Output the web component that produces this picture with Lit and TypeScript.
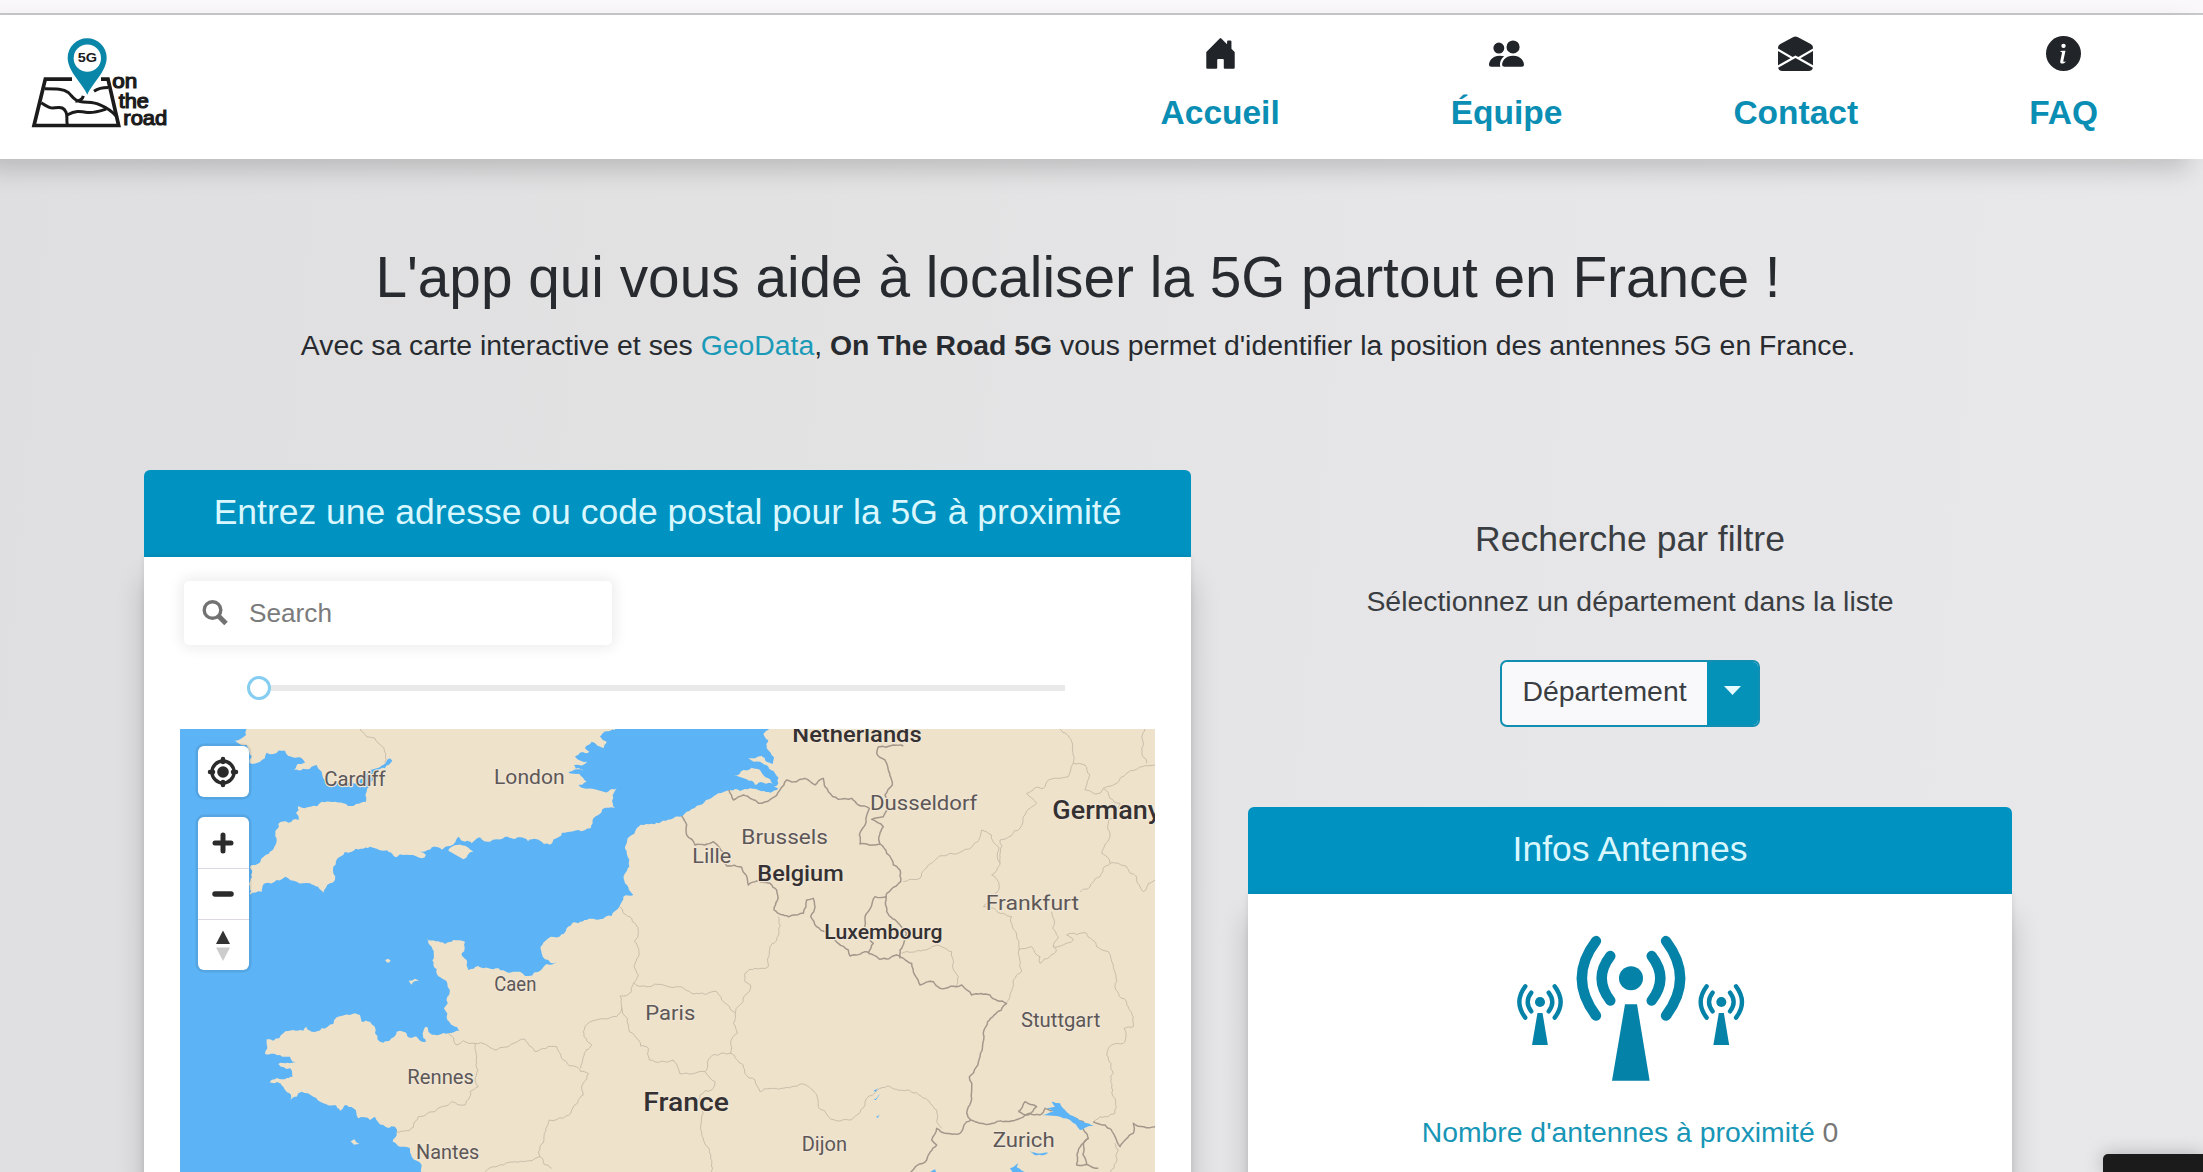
import { LitElement, html, svg, css } from "lit";
import { customElement } from "lit/decorators.js";

type Pt = [number, number];

/** Turns "x,y x,y ..." into a path whose edges are broken up like a natural shoreline. */
function trace(points: string, amount = 0.16, closed = false): string {
  let seed = points.length * 7 + 3;
  const rnd = () => {
    seed = (seed * 1103515245 + 12345) % 2147483648;
    return seed / 2147483648 - 0.5;
  };
  const pts = points.trim().split(/\s+/).map((p) => p.split(",").map(Number) as Pt);
  const out: Pt[] = [pts[0]];
  const split = (a: Pt, b: Pt) => {
    const dx = b[0] - a[0];
    const dy = b[1] - a[1];
    const len = Math.hypot(dx, dy);
    if (len < 11 || len > 400) {
      out.push(b);
      return;
    }
    const k = rnd() * 2 * amount;
    const m: Pt = [(a[0] + b[0]) / 2 - dy * k, (a[1] + b[1]) / 2 + dx * k];
    split(a, m);
    split(m, b);
  };
  for (let i = 1; i < pts.length; i++) split(pts[i - 1], pts[i]);
  return "M" + out.map((p) => p[0].toFixed(1) + "," + p[1].toFixed(1)).join("L") + (closed ? "Z" : "");
}

const LAND = [
  "235,20 228,45 195,62 230,75 238,95 245,108 240,130 270,125 290,98 310,102 345,92 355,108 385,112 405,128 368,150 410,148 440,135 455,155 475,190 540,188 585,165 620,145 648,128 660,115 667,122 645,145 610,180 592,205 588,245 550,258 520,250 455,245 385,258 378,280 385,300 355,308 325,312 320,360 300,395 262,432 240,440 240,524 275,515 285,490 320,480 345,470 380,485 420,490 460,518 480,490 495,480 490,440 510,410 545,395 600,380 640,392 680,412 720,405 755,415 768,405 750,395 790,380 840,378 865,350 885,365 905,370 930,352 960,365 1000,355 1050,352 1100,358 1143,373 1165,352 1225,330 1262,325 1270,295 1335,265 1340,205 1290,212 1250,206 1190,195 1250,185 1195,158 1240,152 1200,130 1252,125 1215,110 1258,95 1245,85 1265,65 1300,85 1310,65 1290,50 1335,30 1335,20",
  "835,392 875,376 910,395 880,418",
  "1812,20 1780,42 1795,60 1790,85 1812,112 1808,132 1775,108 1735,115 1770,125 1795,140 1815,160 1825,190 1812,200 1825,206 1775,214 1740,205 1680,210 1662,215 1645,220 1631,229 1617,238 1603,247 1590,255 1574,264 1558,273 1544,281 1530,290 1507,296 1484,302 1460,308 1400,325 1378,350 1370,400 1378,440 1365,490 1390,525 1360,530 1348,560 1290,598 1190,625 1135,655 1115,700 1125,718 1160,725 1130,732 1105,755 1065,768 1030,755 970,748 925,738 895,750 890,720 875,700 885,665 850,660 825,672 770,655 785,680 790,735 825,780 832,830 832,900 868,932 835,940 780,940 770,920 758,940 768,965 740,950 715,952 700,935 680,935 640,968 615,940 600,905 575,905 570,885 540,885 500,892 490,912 455,925 425,935 410,920 400,932 370,930 340,940 310,962 290,958 292,985 285,1002 330,1005 360,1010 380,1030 325,1032 360,1045 368,1070 345,1078 300,1088 340,1100 360,1145 380,1130 395,1115 430,1130 460,1150 495,1155 510,1172 525,1155 550,1165 565,1195 600,1200 615,1190 640,1215 675,1220 680,1240 668,1265 690,1280 720,1285 725,1310 755,1335 760,1370 2970,1370 2970,20",
  "1692,165 1720,150 1770,150 1795,175 1812,195 1780,188 1755,195 1730,178",
  "645,720 655,716 662,722 652,728",
  "716,782 735,776 747,784 730,786 724,794",
  "542,1264 553,1258 568,1272 552,1274",
];

const REGIONS = [
  "570,27 590,50 615,55 642,85 645,130",
  "1348,560 1385,595 1405,635 1393,665 1405,710 1392,740 1405,765 1390,790 1385,815 1350,828 1355,862 1340,890 1310,897 1245,920 1240,935 1265,975 1240,1010 1232,1045",
  "1392,788 1430,800 1480,795 1520,800 1580,820 1640,815 1665,850 1698,880",
  "1355,862 1372,895 1378,935 1405,960 1412,978 1435,985 1438,1020 1510,1020 1522,1040 1530,1062 1605,1055 1628,1005 1685,1000",
  "835,940 858,975 880,962 915,970 975,990 1030,970 1065,958 1095,995 1160,980 1175,1015 1255,1060 1240,1090 1240,1125 1205,1170 1180,1195 1138,1200 1110,1310 1145,1345",
  "915,970 918,1020 915,1080 925,1100 900,1115 885,1155 845,1145 800,1170 745,1190 730,1222 680,1236",
  "1110,1310 1060,1325 1000,1335 940,1360",
  "1605,1055 1635,1085 1625,1110 1590,1125 1600,1180 1592,1215 1600,1260 1620,1300 1625,1360",
  "1825,590 1825,645 1800,680 1795,740 1755,745 1725,760 1725,785 1742,795 1722,830 1695,880 1690,910 1702,940 1682,965 1682,1000 1720,1035 1725,1060 1755,1080 1770,1115 1825,1108 1890,1092 1925,1108 1940,1125 1945,1160 1975,1190 2010,1203 2070,1178 2085,1145 2115,1118 2155,1098 2180,1108 2240,1118 2280,1150 2300,1170 2300,1205 2315,1225",
  "2195,700 2260,690 2315,680 2345,695 2348,735 2365,770 2358,800",
  "2200,485 2250,475 2285,430 2340,400 2410,375 2435,330 2465,345 2485,380 2490,430 2465,465 2488,500 2470,530 2440,560 2500,580 2525,590 2540,650 2545,700 2555,755 2530,800 2510,845",
  "2670,27 2705,65 2710,130 2695,170 2635,180 2620,205 2570,220 2600,250 2565,285 2550,325 2490,360 2490,430",
  "2710,130 2745,135 2760,165 2745,210 2790,220 2800,205 2850,175 2895,150 2955,135",
  "2925,27 2918,80 2930,130",
  "2800,205 2820,235 2850,250 2830,290 2815,310 2820,345 2795,400 2820,430 2790,470 2765,490 2730,515",
  "2820,430 2870,440 2900,470 2920,515 2935,490 2955,480",
  "2645,575 2648,625 2665,650 2650,680 2710,660 2690,645 2750,640 2780,680 2815,695 2830,735 2835,800 2870,850 2890,890 2890,920 2862,925 2865,965 2815,985 2810,1005 2830,1060 2828,1110 2835,1180 2790,1190 2770,1210",
  "2545,690 2585,680 2610,710 2610,730 2640,710 2660,690 2650,680",
  "2835,1270 2845,1290 2840,1325 2820,1360",
];

const FRONTIERS = [
  "1535,288 1550,315 1550,345 1575,375 1605,375 1630,365 1660,400 1670,438 1715,442 1735,495 1755,485 1800,490 1820,510 1812,570 1855,590 1900,580 1910,540 1930,535 1935,560 1922,590 1940,620 1970,635 2005,670 2035,690 2040,708 2090,695 2130,718 2180,705 2225,730 2250,795 2290,785 2310,805 2375,795 2405,825 2460,825 2510,850 2442,930 2430,1010 2398,1070 2405,1110 2390,1180 2402,1200 2370,1240 2325,1240 2300,1225 2285,1260 2300,1275 2270,1320 2220,1360",
  "1677,210 1690,240 1720,225 1765,250 1830,210 1850,180 1880,185 1905,175 1935,195 1960,175 1975,215 2005,238 2045,235 2065,255 2098,265 2068,345 2070,372 2130,372 2150,400 2170,435 2190,450 2192,485 2150,520 2150,575 2190,615 2210,640 2190,690 2190,715",
  "2130,372 2140,320 2105,298 2140,290 2155,265 2145,225 2167,195 2155,150 2145,120 2120,100 2125,80 2170,75 2200,78",
  "2150,530 2115,530 2085,600 2090,640 2110,670 2095,700",
  "2402,1200 2430,1210 2500,1205 2550,1195 2580,1180 2610,1185 2625,1165 2690,1185 2740,1205 2755,1255 2725,1290 2720,1335 2785,1345",
  "2545,1175 2565,1145 2600,1160 2575,1185 2545,1175",
  "2770,1205 2805,1215 2835,1250 2850,1280 2890,1240 2890,1210 2955,1220",
  "2755,1255 2740,1270 2750,1335",
];

const WATERS = [
  "2615,1185 2650,1175 2630,1165 2655,1160 2645,1145 2670,1150 2700,1185 2740,1205 2772,1218 2730,1230 2700,1200 2660,1188",
  "2575,1290 2600,1300 2635,1298 2620,1306 2595,1306",
  "2520,1345 2545,1330 2540,1342 2570,1360 2530,1360",
  "2270,1358 2295,1348 2300,1360",
  "2110,1140 2130,1122 2118,1140",
  "2110,1112 2125,1103 2118,1115",
  "2118,1190 2130,1183 2124,1194",
];

interface Place {
  name: string;
  x: number;
  y: number;
  w: number;
  size?: number;
  country?: boolean;
}

const PLACES: Place[] = [
  { name: "Cardiff", x: 463, y: 197, w: 184 },
  { name: "London", x: 972, y: 192, w: 212 },
  { name: "Caen", x: 973, y: 813, w: 126 },
  { name: "Paris", x: 1426, y: 901, w: 150 },
  { name: "Rennes", x: 712, y: 1091, w: 200 },
  { name: "Nantes", x: 738, y: 1318, w: 190 },
  { name: "France", x: 1420, y: 1172, w: 257, size: 80, country: true },
  { name: "Netherlands", x: 1867, y: 65, w: 388, size: 66, country: true },
  { name: "Dusseldorf", x: 2100, y: 270, w: 322 },
  { name: "Brussels", x: 1714, y: 372, w: 260 },
  { name: "Lille", x: 1567, y: 430, w: 117 },
  { name: "Belgium", x: 1762, y: 483, w: 259, size: 66, country: true },
  { name: "Germany", x: 2647, y: 298, w: 326, size: 76, country: true },
  { name: "Luxembourg", x: 1963, y: 658, w: 355, size: 62, country: true },
  { name: "Frankfurt", x: 2447, y: 571, w: 280 },
  { name: "Stuttgart", x: 2553, y: 920, w: 238 },
  { name: "Zurich", x: 2468, y: 1282, w: 186 },
  { name: "Dijon", x: 1895, y: 1293, w: 136 },
];

@customElement("coverage-map")
export class CoverageMap extends LitElement {
  static styles = css`
    :host { display: block; position: relative; width: 975px; height: 447px; overflow: hidden; background: #5cb3f5; }
    .canvas { display: block; width: 975px; height: 443px; }
    .land { fill: #eee2cb; }
    .water { fill: #5cb3f5; }
    .region { fill: none; stroke: #c9beaa; stroke-width: 3; }
    .frontier { fill: none; stroke: #a2978a; stroke-width: 4.4; stroke-linejoin: round; }
    .place { font-family: Roboto, "Liberation Sans", sans-serif; font-size: 62px; fill: #5d5758; stroke: #f0e6d3; stroke-width: 7px; paint-order: stroke; stroke-linejoin: round; }
    .country { font-weight: 500; fill: #353133; }
    .controls { position: absolute; left: 17.5px; top: 17.5px; display: flex; flex-direction: column; gap: 20px; }
    .group { width: 51px; background: #fff; border-radius: 6px; box-shadow: 0 0 0 2.5px rgba(0, 0, 0, 0.08); overflow: hidden; }
    .ctl { display: flex; align-items: center; justify-content: center; height: 51px; }
    .ctl + .ctl { border-top: 1px solid #ddd8e0; height: 50px; }
    .ctl svg { display: block; width: 34px; height: 34px; }
  `;

  render() {
    return html`
      <svg class="canvas" viewBox="30 27 2925 1329">
        ${LAND.map((p) => svg`<path class="land" d=${trace(p, 0.2, true)} />`)}
        ${REGIONS.map((p) => svg`<path class="region" d=${trace(p)} />`)}
        ${FRONTIERS.map((p) => svg`<path class="frontier" d=${trace(p, 0.12)} />`)}
        ${WATERS.map((p) => svg`<path class="water" d=${trace(p, 0.1, true)} />`)}
        ${PLACES.map(
          (p) => svg`<text class=${p.country ? "place country" : "place"} x=${p.x} y=${p.y}
            style="font-size:${p.size ?? 62}px" textLength=${p.w} lengthAdjust="spacingAndGlyphs">${p.name}</text>`
        )}
      </svg>
      <div class="controls">
        <div class="group">
          <div class="ctl">
            <svg viewBox="0 0 34 34" fill="none" stroke="#2b2b2b">
              <circle cx="17" cy="17" r="11" stroke-width="3.4" />
              <circle cx="17" cy="17" r="5.8" fill="#2b2b2b" stroke="none" />
              <path d="M17 4V7M17 27v3M4 17H7M27 17h3" stroke-width="4.500" stroke-linecap="round" />
            </svg>
          </div>
        </div>
        <div class="group">
          <div class="ctl">
            <svg viewBox="0 0 34 34"><path d="M17 9v16M9 17h16" stroke="#2b2b2b" stroke-width="5" stroke-linecap="round" /></svg>
          </div>
          <div class="ctl">
            <svg viewBox="0 0 34 34"><path d="M9 17h16" stroke="#2b2b2b" stroke-width="5.500" stroke-linecap="round" /></svg>
          </div>
          <div class="ctl">
            <svg viewBox="0 0 34 34"><path d="M10 16L17 2.500 24 16z" fill="#333" /><path d="M10 19.500L17 33l7-13.500z" fill="#ccc" /></svg>
          </div>
        </div>
      </div>
    `;
  }
}

const NAV = [
  {
    label: "Accueil",
    d: "M6.500 14.500v-3.505c0-.245.25-.495.5-.495h2c.25 0 .5.25.5.5v3.500a.5.5 0 0 0 .5.5h4a.5.5 0 0 0 .5-.5v-7a.5.5 0 0 0-.146-.354L13 5.793V2.500a.5.5 0 0 0-.5-.5h-1a.5.5 0 0 0-.5.5v1.293L8.354 1.146a.5.5 0 0 0-.708 0l-6 6A.5.5 0 0 0 1.500 7.500v7a.5.5 0 0 0 .5.5h4a.5.5 0 0 0 .5-.5z",
  },
  {
    label: "Équipe",
    d: "M7 14s-1 0-1-1 1-4 5-4 5 3 5 4-1 1-1 1H7zm4-6a3 3 0 1 0 0-6 3 3 0 0 0 0 6zM5.216 14A2.238 2.238 0 0 1 5 13c0-1.355.68-2.750 1.936-3.720A6.325 6.325 0 0 0 5 9c-4 0-5 3-5 4s1 1 1 1h4.216zM4.500 8a2.500 2.500 0 1 0 0-5 2.500 2.500 0 0 0 0 5z",
  },
  {
    label: "Contact",
    d: "M8.941.435a2 2 0 0 0-1.882 0l-6 3.200A2 2 0 0 0 0 5.400v.314l6.709 3.932L8 8.928l1.291.718L16 5.714V5.400a2 2 0 0 0-1.059-1.765l-6-3.200zM16 6.873l-5.693 3.337L16 13.372v-6.500zm-.059 7.611L8 10.072.059 14.484A2 2 0 0 0 2 16h12a2 2 0 0 0 1.941-1.516zM0 13.373l5.693-3.163L0 6.873v6.500z",
  },
  {
    label: "FAQ",
    d: "M8 16A8 8 0 1 0 8 0a8 8 0 0 0 0 16zm.93-9.412-1 4.705c-.07.34.029.533.304.533.194 0 .487-.07.686-.246l-.088.416c-.287.346-.92.598-1.465.598-.703 0-1.002-.422-.808-1.319l.738-3.468c.064-.293.006-.399-.287-.47l-.451-.081.082-.381 2.290-.287zM8 5.500a1 1 0 1 1 0-2 1 1 0 0 1 0 2z",
  },
];

const antenna = (transform: string) => svg`
  <g transform=${transform}>
    <circle cx="0" cy="0" r="36" fill="#0582a8" />
    <path d="M-18 78H18L56 307H-57Z" fill="#0582a8" />
    <path d="M-62 -67Q-114 0 -62 67M62 -67Q114 0 62 67M-105 -112Q-190 0 -105 112M105 -112Q190 0 105 112"
      fill="none" stroke="#0582a8" stroke-width="31" stroke-linecap="round" />
  </g>`;

@customElement("app-root")
export class AppRoot extends LitElement {
  static styles = css`
    :host { display: block; height: 1172px; overflow: hidden; position: relative; color: #272b2f; font-family: "Liberation Sans", Arial, sans-serif; font-size: 28.4px; background: linear-gradient(95deg, #dfdee0 0%, #e2e2e3 35%, #e6e5e7 65%, #e8e7e9 100%); }
    .chrome { height: 13px; background: #faf8fa; border-bottom: 2px solid #c9c8ca; }
    .nav { display: flex; justify-content: space-between; height: 144px; background: #fff; box-shadow: -14px 11px 23px rgba(0, 0, 0, 0.17); padding: 0 105px 0 30px; }
    .logo { width: 140px; height: 97px; margin-top: 18px; }
    .logo text { fill: #1b1b1b; font-family: "Liberation Sans", Arial, sans-serif; }
    .word { font-size: 60px; stroke: #1b1b1b; stroke-width: 3.5px; }
    .gen { font-size: 36px; font-weight: bold; }
    .links { display: flex; gap: 171px; padding-top: 21px; }
    .link { display: flex; flex-direction: column; align-items: center; }
    .link svg { width: 35px; height: 35px; fill: #212529; }
    .label { margin-top: 23px; font-size: 33.5px; line-height: 38px; font-weight: bold; color: #0a8eb3; }
    .intro { text-align: center; padding-right: 47px; margin-top: 85px; }
    .title { margin: 0; font-weight: normal; font-size: 56.750px; line-height: 68px; }
    .lead { margin: 12px 0 0; line-height: 43px; font-size: 28.370px; }
    .geo { color: #1b9ab8; }
    .columns { display: grid; grid-template-columns: 1047px 764px; column-gap: 57px; padding-left: 144px; margin-top: 102.500px; }
    .head { height: 87px; line-height: 84px; border-radius: 6px 6px 0 0; background: #0092c0; color: #d9f7ff; font-size: 35.500px; text-align: center; }
    .body { background: #fff; box-shadow: 0 24px 26px rgba(0, 0, 0, 0.19), 0 0 6px rgba(0, 0, 0, 0.1); height: 800px; }
    .tools { padding: 24px 36px 0 40px; }
    .search { display: flex; align-items: center; gap: 20px; width: 411px; height: 64px; padding-left: 17px; border-radius: 5px; background: #fff; box-shadow: 0 0 14px 3px rgba(0, 0, 0, 0.08); color: #7b7b7b; font-size: 26.2px; line-height: 32px; }
    .search span { padding-top: 1px; }
    .search svg { width: 28px; height: 28px; }
    .slider { display: flex; align-items: center; height: 24px; margin: 31px 90px 0 63px; }
    .knob { box-sizing: border-box; width: 24px; height: 24px; border: 3px solid #85cdf1; border-radius: 50%; background: #fff; }
    .rail { flex: 1; height: 6px; background: #e9e9e9; }
    .map { margin-left: 36px; margin-top: 29px; }
    .filter { display: flex; flex-direction: column; align-items: center; height: 337px; box-sizing: border-box; padding-top: 48px; color: #3a3e42; }
    .subtitle { font-size: 35.500px; line-height: 42px; }
    .hint { margin-top: 20px; line-height: 43px; }
    .split { display: flex; margin-top: 37px; box-sizing: border-box; width: 260px; height: 67px; border: 2px solid #118fb3; border-radius: 7px; overflow: hidden; background: #f9f9fb; }
    .choice { width: 205px; line-height: 59px; text-align: center; }
    .toggle { flex: 1; display: flex; align-items: center; justify-content: center; background: #0492b8; }
    .toggle svg { width: 17px; height: 9px; margin-bottom: 6px; }
    .info { display: flex; flex-direction: column; align-items: center; }
    .masts { width: 230px; height: 150px; margin-top: 39px; margin-left: 2px; }
    .count { margin-top: 28px; line-height: 43px; color: #1896b6; font-size: 28.350px; }
    .total { color: #777; }
    .corner { position: absolute; right: 0; bottom: 0; width: 100px; height: 18px; background: #1c1b1c; border-top-left-radius: 5px; box-shadow: 0 0 18px rgba(0, 0, 0, 0.25); }
  `;

  render() {
    return html`
      <div class="chrome"></div>
      <nav class="nav">
        <svg class="logo" viewBox="90 100 420 290">
          <path d="M216 238H136L102 377H356L324 238H303" fill="none" stroke="#1b1b1b" stroke-width="11" />
          <path d="M134 267C170 267 190 267 205 278C217 289 222 302 240 305C262 309 280 304 300 315C325 325 340 338 352 352M226 304C242 303 248 297 250 288M282 274C295 265 305 263 325 263M124 309C145 322 150 326 165 324C185 321 192 324 198 337C204 350 198 360 202 375M203 345C225 332 240 334 262 338C285 340 300 334 318 328"
            fill="none" stroke="#1b1b1b" stroke-width="9" />
          <path d="M262 285C247 250 203 215 203 174A58.500 58.500 0 0 1 320 174C320 215 277 250 262 285Z" fill="#0a86a8" />
          <circle cx="262" cy="175" r="41" fill="#fff" />
          <text class="gen" x="233" y="188" textLength="58" lengthAdjust="spacingAndGlyphs">5G</text>
          <text class="word" x="337" y="264" textLength="75" lengthAdjust="spacingAndGlyphs">on</text>
          <text class="word" x="356" y="324" textLength="91" lengthAdjust="spacingAndGlyphs">the</text>
          <text class="word" x="370" y="377" textLength="132" lengthAdjust="spacingAndGlyphs">road</text>
        </svg>
        <div class="links">
          ${NAV.map(
            (n) => html`<div class="link">
              <svg viewBox="0 0 16 16"><path d=${n.d} /></svg>
              <span class="label">${n.label}</span>
            </div>`
          )}
        </div>
      </nav>
      <section class="intro">
        <h1 class="title">L'app qui vous aide à localiser la 5G partout en France !</h1>
        <p class="lead">
          Avec sa carte interactive et ses <span class="geo">GeoData</span>, <b>On The Road 5G</b> vous permet d'identifier la
          position des antennes 5G en France.
        </p>
      </section>
      <main class="columns">
        <section>
          <div class="head">Entrez une adresse ou code postal pour la 5G à proximité</div>
          <div class="body">
            <div class="tools">
              <div class="search">
                <svg viewBox="0 0 28 28" fill="none" stroke="#727272">
                  <circle cx="11.500" cy="11" r="8.300" stroke-width="3.400" />
                  <path d="M17.500 17l7.500 7.500" stroke-width="5" />
                </svg>
                <span>Search</span>
              </div>
              <div class="slider"><div class="knob"></div><div class="rail"></div></div>
            </div>
            <coverage-map class="map"></coverage-map>
          </div>
        </section>
        <section>
          <div class="filter">
            <div class="subtitle">Recherche par filtre</div>
            <div class="hint">Sélectionnez un département dans la liste</div>
            <div class="split">
              <div class="choice">Département</div>
              <div class="toggle"><svg viewBox="0 0 17 9"><path d="M0 0H17L8.500 9Z" fill="#e6fbff" /></svg></div>
            </div>
          </div>
          <div class="head">Infos Antennes</div>
          <div class="body info">
            <svg class="masts" viewBox="110 100 690 450">
              ${antenna("translate(182 307) scale(.42)")} ${antenna("translate(455 236)")} ${antenna("translate(726 307) scale(.42)")}
            </svg>
            <div class="count">Nombre d'antennes à proximité <span class="total">0</span></div>
          </div>
        </section>
      </main>
      <div class="corner"></div>
    `;
  }
}
